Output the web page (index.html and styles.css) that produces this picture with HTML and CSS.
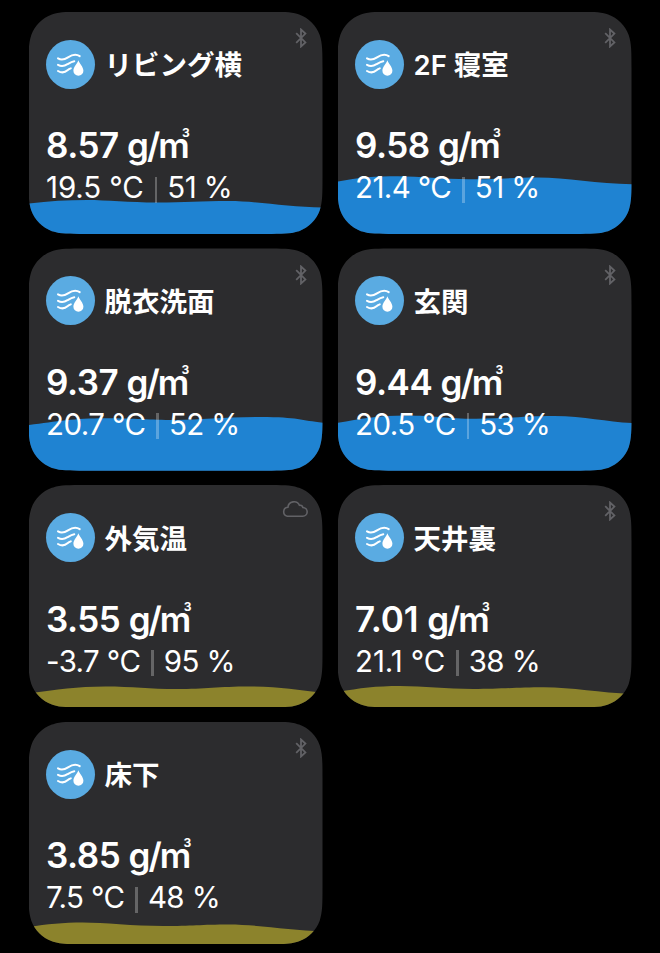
FILE: index.html
```html
<!DOCTYPE html>
<html lang="ja">
  <head>
    <meta charset="utf-8">
    <title>湿度</title>
    <link rel="stylesheet" href="styles.css">
  </head>
  <body>
    <svg class="symbols">
      <symbol id="humidity" viewBox="0 0 49 49">
        <g fill="none" stroke="#fff" stroke-width="2" stroke-linecap="round">
          <path d="M12 18.3C15 20.2 18 19.9 22 17.3S29.500 13.300 33.700 16.100" />
          <path d="M12 24.8C16 27 18.500 26 21.500 24.200S25.500 21.700 28.300 21.200" />
          <path d="M12 31C16 33.300 19 32.500 21.500 30.300Q23 29 24.800 28.400" />
        </g>
        <path fill="#fff" d="M32.400 20.200C33.400 23.400 37.400 26.800 37.400 30.700A5 5 0 0 1 27.400 30.700C27.400 26.800 31.400 23.400 32.400 20.200Z" />
      </symbol>
      <symbol id="bluetooth" viewBox="0 0 12 20">
        <path d="M1.200 5.200 10.400 14.400 6 18.500V1.500L10.400 5.600 1.200 14.800" fill="none" stroke="#626266" stroke-width="1.8" />
      </symbol>
      <symbol id="cloud" viewBox="0 0 26 18">
        <path d="M5.300 16.200H20.700A4.300 4.300 0 0 0 20.900 7.500A2.900 2.900 0 0 0 17.500 5.300A6.100 6.100 0 0 0 5.900 7.300A4.500 4.500 0 0 0 5.300 16.200Z" fill="none" stroke="#626266" stroke-width="1.6" />
      </symbol>
    </svg>

    <div class="cards">
      <div class="card">
        <svg class="wave" viewBox="0 0 294 222.300"><path d="M0 191.600C20 189 38 188 58 188S100 190.500 128 190.500S172 189 200 189S260 195 294 195.600V223H0Z" /></svg>
        <svg class="status bluetooth"><use href="#bluetooth" /></svg>
        <div class="head">
          <svg class="icon"><use href="#humidity" /></svg>
          <span class="name">リビング横</span>
        </div>
        <div class="reading">8.57 <span class="unit">g/m<sup>3</sup></span></div>
        <div class="details"><span class="loose">19.5 °C</span><span class="divider"></span><span>51 %</span></div>
      </div>

      <div class="card">
        <svg class="wave" viewBox="0 0 294 222.300"><path d="M0 169.600C20 165.500 38 164.300 60 164.300S105 167.300 131 167.300S172 165.600 200 165.600S260 172 294 172.300V223H0Z" /></svg>
        <svg class="status bluetooth"><use href="#bluetooth" /></svg>
        <div class="head">
          <svg class="icon"><use href="#humidity" /></svg>
          <span class="name">2F 寝室</span>
        </div>
        <div class="reading">9.58 <span class="unit">g/m<sup>3</sup></span></div>
        <div class="details"><span>21.4 °C</span><span class="divider"></span><span>51 %</span></div>
      </div>

      <div class="card">
        <svg class="wave" viewBox="0 0 294 222.300"><path d="M0 177C28 173.500 45 170.300 76 170.300S120 172 146 172S195 169 232 169S272 172.500 294 174.700V223H0Z" /></svg>
        <svg class="status bluetooth"><use href="#bluetooth" /></svg>
        <div class="head">
          <svg class="icon"><use href="#humidity" /></svg>
          <span class="name">脱衣洗面</span>
        </div>
        <div class="reading">9.37 <span class="unit">g/m<sup>3</sup></span></div>
        <div class="details"><span>20.7 °C</span><span class="divider"></span><span>52 %</span></div>
      </div>

      <div class="card">
        <svg class="wave" viewBox="0 0 294 222.300"><path d="M0 174.700C22 171 40 167.400 68 167.400S108 170.700 138 170.700S185 168 216 168S268 174 294 175V223H0Z" /></svg>
        <svg class="status bluetooth"><use href="#bluetooth" /></svg>
        <div class="head">
          <svg class="icon"><use href="#humidity" /></svg>
          <span class="name">玄関</span>
        </div>
        <div class="reading">9.44 <span class="unit">g/m<sup>3</sup></span></div>
        <div class="details"><span>20.5 °C</span><span class="divider"></span><span>53 %</span></div>
      </div>

      <div class="card">
        <svg class="wave dry" viewBox="0 0 294 222.300"><path d="M0 208.300C28 204.500 48 201.400 76 201.400S120 204 148 204S190 201.400 220 201.400S268 205 294 207.800V223H0Z" /></svg>
        <svg class="status cloud"><use href="#cloud" /></svg>
        <div class="head">
          <svg class="icon"><use href="#humidity" /></svg>
          <span class="name">外気温</span>
        </div>
        <div class="reading">3.55 <span class="unit">g/m<sup>3</sup></span></div>
        <div class="details"><span>-3.7 °C</span><span class="divider"></span><span>95 %</span></div>
      </div>

      <div class="card">
        <svg class="wave dry" viewBox="0 0 294 222.300"><path d="M0 207C22 203 38 201 62 201S108 204 135 204S178 202.300 206 202.300S262 207.800 294 209V223H0Z" /></svg>
        <svg class="status bluetooth"><use href="#bluetooth" /></svg>
        <div class="head">
          <svg class="icon"><use href="#humidity" /></svg>
          <span class="name">天井裏</span>
        </div>
        <div class="reading"><span class="loose">7.01 </span><span class="unit">g/m<sup>3</sup></span></div>
        <div class="details"><span class="loose">21.1 °C</span><span class="divider"></span><span>38 %</span></div>
      </div>

      <div class="card">
        <svg class="wave dry" viewBox="0 0 294 222.300"><path d="M0 205C18 202 34 200.500 54 200.500S105 204 134 204S172 202.400 200 202.400S262 208.700 294 209V223H0Z" /></svg>
        <svg class="status bluetooth"><use href="#bluetooth" /></svg>
        <div class="head">
          <svg class="icon"><use href="#humidity" /></svg>
          <span class="name">床下</span>
        </div>
        <div class="reading">3.85 <span class="unit">g/m<sup>3</sup></span></div>
        <div class="details"><span>7.5 °C</span><span class="divider"></span><span>48 %</span></div>
      </div>
    </div>
  </body>
</html>
```

FILE: styles.css
```css
html,
body {
  margin: 0;
  padding: 0;
  background: #000;
}

body {
  font-family: Inter, "Noto Sans CJK JP", sans-serif;
  color: #fff;
}

.symbols {
  display: none;
}

.cards {
  display: grid;
  grid-template-columns: 294px 294px;
  grid-auto-rows: 222.3px;
  gap: 14.4px 15px;
  padding: 11.7px 0 0 28.5px;
}

/* rounded with continuous corners, radius 37 */
.card {
  position: relative;
  box-sizing: border-box;
  padding: 28px 17.5px 0;
  background: #2c2c2e;
  overflow: hidden;
  clip-path: path("M56.5 0H237.5C253.7 0 261.9 0 269.2 2.4L270.6 2.8C280.2 6.3 287.7 13.8 291.2 23.4C294 32.1 294 40.3 294 56.5V165.8C294 182 294 190.2 291.2 198.9C287.7 208.5 280.2 216 270.6 219.5L269.2 219.9C261.9 222.3 253.7 222.3 237.5 222.3H56.5C40.3 222.3 32.1 222.3 24.8 219.9L23.4 219.5C13.8 216 6.3 208.5 2.8 198.9C0 190.2 0 182 0 165.8V56.5C0 40.3 0 32.1 2.8 23.4C6.3 13.8 13.8 6.3 23.4 2.8L24.8 2.4C32.1 0 40.3 0 56.5 0Z");
}

.wave {
  position: absolute;
  left: 0;
  bottom: 0;
  width: 294px;
  height: 222.3px;
  fill: #1f83d2;
}

.wave.dry {
  fill: #8c832c;
}

.status {
  position: absolute;
  top: 16.4px;
}

.status.bluetooth {
  right: 15.3px;
  width: 12px;
  height: 20px;
}

.status.cloud {
  top: 15.2px;
  right: 14.7px;
  width: 26px;
  height: 18px;
}

.head {
  position: relative;
  display: flex;
  align-items: center;
  gap: 9.5px;
  height: 49px;
}

.icon {
  width: 49px;
  height: 49px;
  border-radius: 50%;
  background: #5aabe2;
}

.name {
  padding-top: 2px;
  font-size: 27.5px;
  font-weight: 600;
  line-height: 40px;
}

.reading {
  position: relative;
  margin-top: 34.5px;
  font-size: 35px;
  font-weight: 600;
  line-height: 44px;
  letter-spacing: -0.5px;
  white-space: nowrap;
}

.reading .loose {
  letter-spacing: -0.1px;
}

.unit {
  position: relative;
  letter-spacing: -2px;
}

.unit sup {
  position: absolute;
  top: 3px;
  right: -2px;
  font-size: 12px;
  font-weight: 700;
  line-height: 12px;
  letter-spacing: 0;
}

.details {
  position: relative;
  display: flex;
  align-items: center;
  margin-top: 2px;
  font-size: 29.5px;
  font-weight: 400;
  line-height: 36px;
  letter-spacing: -0.6px;
  white-space: nowrap;
}

.details .loose {
  letter-spacing: -0.1px;
}

.divider {
  width: 2.5px;
  height: 26px;
  margin: 5px 10px 0 11px;
  background: rgba(255, 255, 255, 0.27);
}
```
